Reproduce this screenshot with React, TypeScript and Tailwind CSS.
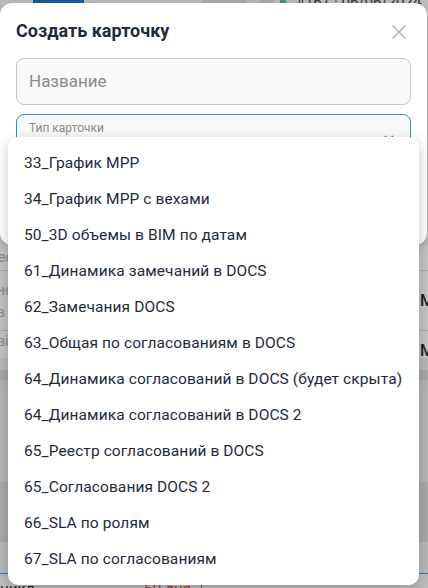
import React from 'react';

const cardTypes = [
    '33_График МРР',
    '34_График МРР с вехами',
    '50_3D объемы в BIM по датам',
    '61_Динамика замечаний в DOCS',
    '62_Замечания DOCS',
    '63_Общая по согласованиям в DOCS',
    '64_Динамика согласований в DOCS (будет скрыта)',
    '64_Динамика согласований в DOCS 2',
    '65_Реестр согласований в DOCS',
    '65_Согласования DOCS 2',
    '66_SLA по ролям',
    '67_SLA по согласованиям',
];

const CloseIcon = () => (
    <svg width="14" height="14" viewBox="0 0 14 14" fill="none">
        <path d="M1 1L13 13M13 1L1 13" stroke="#b0b5bb" strokeWidth="1.6" strokeLinecap="round" />
    </svg>
);

const App = () => {
    return (
        <div
            className="relative h-[588px] w-[428px] overflow-hidden bg-[#bdbdbd]"
            style={{ fontFamily: 'Roboto, "Noto Sans", sans-serif' }}
        >
            {/* Page behind the dialog (dimmed) */}
            <div className="flex flex-col">
                <div className="flex h-[245px] items-start">
                    <div className="ml-[33px] mt-[-26px] h-[58px] w-[58px] rounded-full bg-[#1b5a9a]" />
                    <div className="ml-[118px] h-[3px] w-[50px] bg-[#a9abad]" />
                    <div className="h-[3px] w-[16px] bg-[#b8b8b8]" />
                    <div className="h-[3px] w-[16px] bg-[#a9abad]" />
                    <div className="ml-[6px] h-[3px] w-[6px] bg-[#3c9a6a]" />
                    <div className="ml-[10px] mt-[-9px] text-[15px] text-[#333]">#161 · 06/06/2024 · M</div>
                </div>
                <div className="flex h-[25px] items-center justify-between bg-[#c4c4c4] text-[14px] text-[#8a8a8a]">
                    <span className="-ml-[2px]">ес</span>
                </div>
                <div className="flex h-[60px] items-center justify-between border-t border-[#a9a9a9] bg-[#c4c4c4] text-[14px] text-[#8a8a8a]">
                    <span className="-ml-[3px] leading-[22px]">не<br />в</span>
                    <span className="mr-[-6px] text-[16px] font-medium text-[#222]">M</span>
                </div>
                <div className="flex h-[28px] items-start justify-between border-t border-[#a9a9a9] bg-[#c4c4c4] text-[14px] text-[#8a8a8a]">
                    <span className="-ml-[3px]">ві</span>
                    <span className="mr-[-6px] mt-[8px] text-[16px] font-medium text-[#222]">M</span>
                </div>
                <div className="h-[12px] bg-[#b9b9b9]" />
                <div className="h-[10px] bg-[#a8a9aa]" />
                <div className="h-[12px] bg-[#b3b3b3]" />
                <div className="h-[90px] bg-[#b6b6b6]" />
                <div className="h-[60px] bg-[#a9aaab]" />
                <div className="h-[32px] border-b border-[#2a78b8] bg-[#b9b9b9]" />
                <div className="flex h-[20px] items-start bg-[#bdbdbd] pt-[4px] text-[15px]">
                    <span className="text-[#222]">цикл</span>
                    <span className="ml-[110px] text-[#b43030]">60 дня</span>
                    <div className="ml-[10px] h-full w-px bg-[#2a78b8]" />
                </div>
            </div>

            {/* Dialog */}
            <div className="absolute left-0 top-[3px] h-[242px] w-[427px] rounded-xl bg-white shadow-[0_2px_10px_rgba(0,0,0,0.15)]">
                <div className="flex items-center justify-between px-4 pb-[19px] pt-[20px]">
                    <h2 className="text-[18px] font-bold leading-[16px] text-[#1d2b3d]">Создать карточку</h2>
                    <button className="mr-[5px] mt-[1px]">
                        <CloseIcon />
                    </button>
                </div>
                <div className="flex flex-col gap-[9px] px-4">
                    <div className="flex h-[47px] items-center rounded-lg border border-[#c3c8cd] bg-[#f9f9f7] px-3 text-[17px] text-[#8c8c8c]">
                        Название
                    </div>
                    <div className="relative h-[47px] rounded-lg border border-[#2196d6] bg-[#f9f9f7] px-3 pt-[4px] text-[12px] text-[#8c8c8c]">
                        Тип карточки
                        <svg className="absolute right-[16px] top-[20px]" width="10" height="6" viewBox="0 0 10 6" fill="none">
                            <path d="M1 1l4 4 4-4" stroke="#2196d6" strokeWidth="1.6" />
                        </svg>
                    </div>
                </div>
            </div>

            {/* Dropdown menu */}
            <ul className="absolute left-[8px] top-[137px] w-[411px] rounded-[10px] bg-white py-[8px] shadow-[0_4px_14px_rgba(0,0,0,0.22)]">
                {cardTypes.map((t) => (
                    <li key={t} className="flex h-[36px] items-center whitespace-nowrap px-4 pt-[1px] text-[15.5px] tracking-[0.1px] text-[#1d2b3d]">
                        {t}
                    </li>
                ))}
            </ul>
        </div>
    );
};

export default App;
